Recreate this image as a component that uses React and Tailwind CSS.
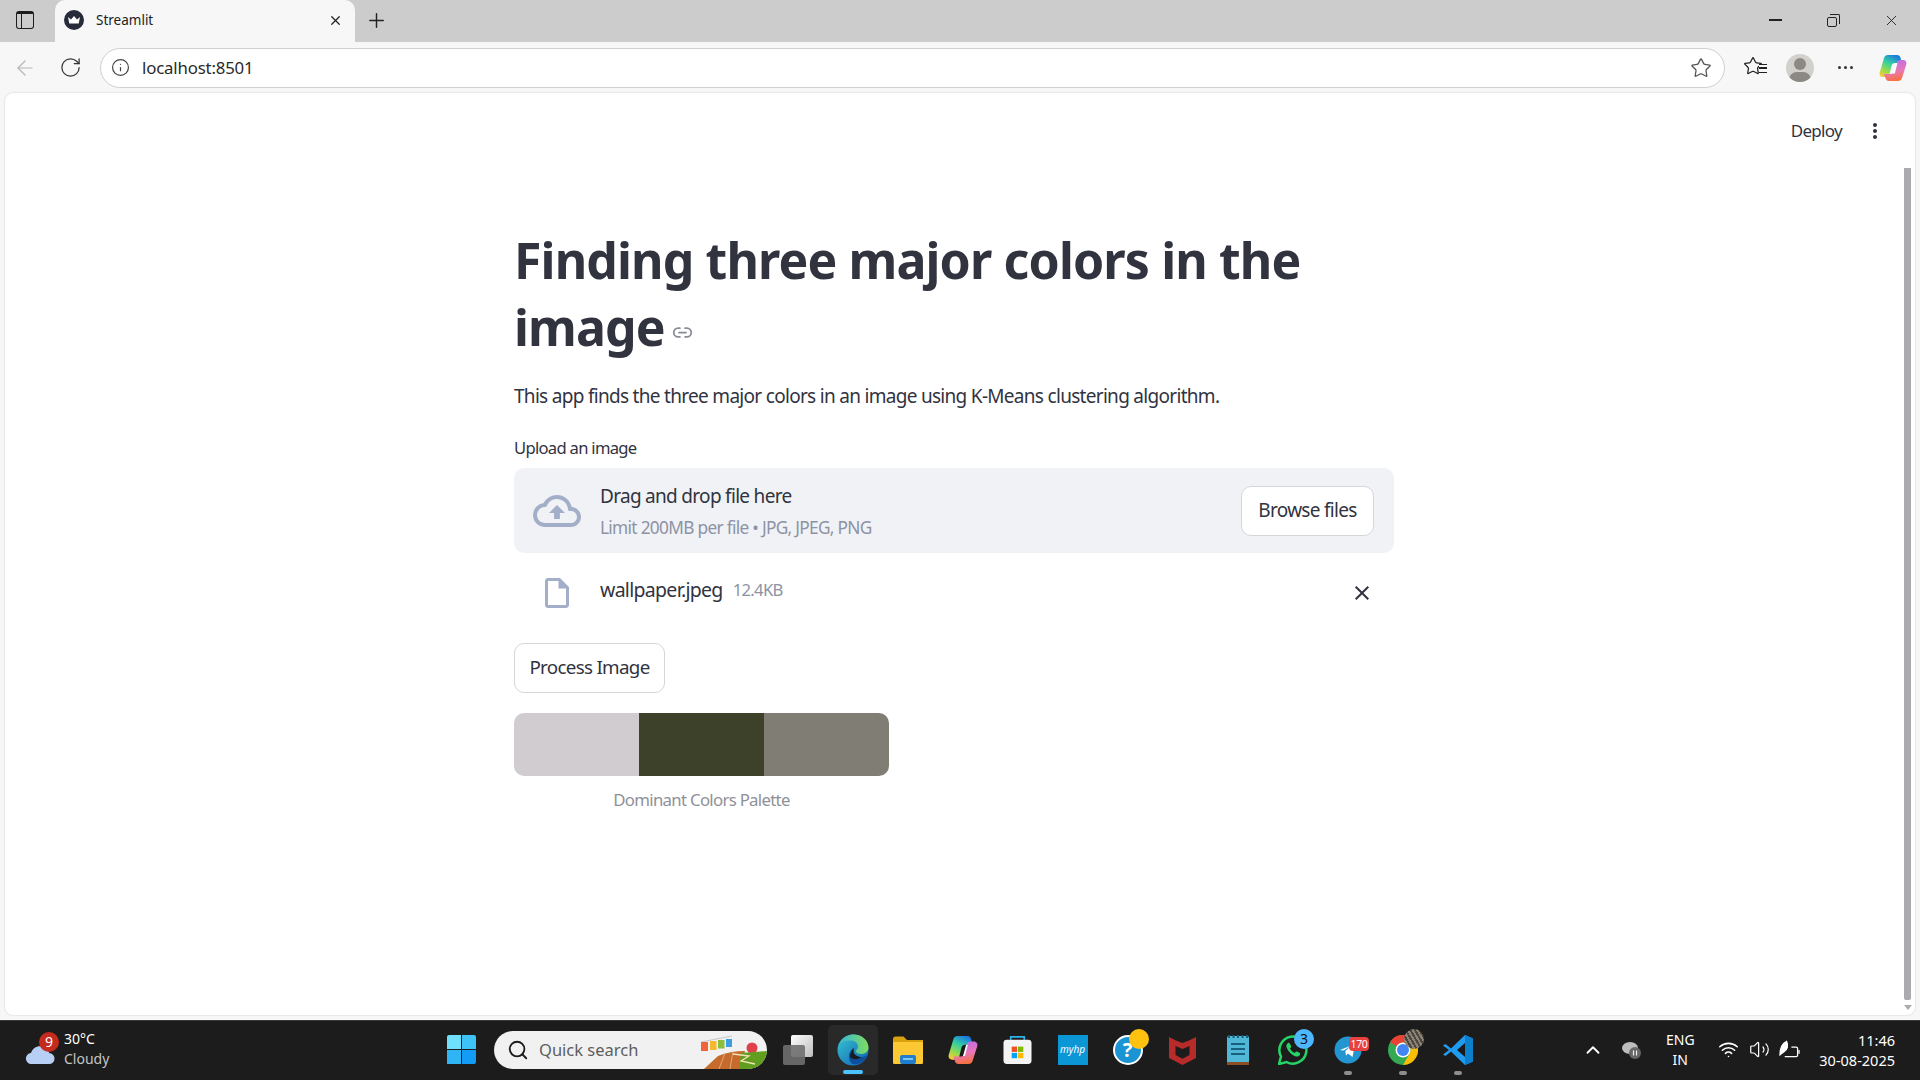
import React from 'react'
import { ArrowLeft, ChevronUp, Info, Link2, Plus, RotateCw, Search, Star, Volume2, Wifi, X } from 'lucide-react'
import { MdClose, MdMoreVert, MdOutlineCloudUpload, MdOutlineInsertDriveFile } from 'react-icons/md'

const ui = "font-['Noto_Sans','Open_Sans',sans-serif]"
const st = "font-['Noto_Sans',sans-serif] tracking-[-0.7px]"

const Crown = () => (
  <svg viewBox="0 0 20 20" className="w-5 h-5">
    <circle cx="10" cy="10" r="10" fill="#262b3a" />
    <path d="M4 7l3 2.5L10 6l3 3.5L16 7l-1.3 6.5H5.300z" fill="#fff" />
  </svg>
)

const WindowsLogo = () => (
  <div className="grid grid-cols-2 gap-[1px] w-[29px] h-[29px]">
    <div className="bg-[#6fe0fb] rounded-tl-[2px]" />
    <div className="bg-[#3dc3f7] rounded-tr-[2px]" />
    <div className="bg-[#2fb4f4]" />
    <div className="bg-[#129cf5] rounded-br-[2px]" />
  </div>
)

const Copilot = ({ size = 28, id = 'cop' }) => (
  <svg viewBox="0 0 28 28" width={size} height={size}>
    <defs>
      <linearGradient id={`${id}A`} x1="0.3" y1="0" x2="0.5" y2="1">
        <stop offset="0" stopColor="#c06be8" />
        <stop offset="0.55" stopColor="#e878b8" />
        <stop offset="1" stopColor="#f8703a" />
      </linearGradient>
      <linearGradient id={`${id}B`} x1="0.7" y1="0" x2="0.2" y2="1">
        <stop offset="0" stopColor="#1a78e4" />
        <stop offset="0.4" stopColor="#35cfa0" />
        <stop offset="0.75" stopColor="#9bdc4a" />
        <stop offset="1" stopColor="#f6c93c" />
      </linearGradient>
    </defs>
    <path d="M9 1h9c2 0 3 1 3.600 3l1.500 5h-7c-2 0-3.100 1-3.600 3l-2 8c-.6 2-2 3-4 3H4C1.500 23 0 21 .7 18.500L5 4c.6-2 2-3 4-3z" fill={`url(#${id}B)`} />
    <path d="M19 27h-9c-2 0-3-1-3.600-3L5 20h7c2 0 3.100-1 3.600-3l2-8c.6-2 2-3 4-3h2.400c2.500 0 4 2 3.300 4.500L23 24c-.6 2-2 3-4 3z" fill={`url(#${id}A)`} />
    <path d="M17 9h1.500l-2.700 10.500H14z" fill="#fff" />
  </svg>
)

const Edge = () => (
  <svg viewBox="0 0 32 32" className="relative w-8 h-8">
    <defs>
      <linearGradient id="edgeA" x1="0" y1="0" x2="1" y2="1">
        <stop offset="0" stopColor="#37c6d0" />
        <stop offset="1" stopColor="#0f5fb5" />
      </linearGradient>
      <linearGradient id="edgeB" x1="0" y1="0" x2="1" y2="0">
        <stop offset="0" stopColor="#36b7d8" />
        <stop offset="1" stopColor="#7fdc5f" />
      </linearGradient>
    </defs>
    <circle cx="16" cy="16" r="15.500" fill="url(#edgeA)" />
    <path d="M2 11C5 3 12 .5 17 .5c8 0 14.500 6 14.500 13 0 4-3 6.500-7.500 6.500-3 0-5-1-5-2.500 0-2 2-2 2-5 0-3.500-3.500-6-7.500-6C8 6.500 4 8 2 11z" fill="url(#edgeB)" />
    <path d="M12 22c0-4 3-7 6-8.500-1 1-1.500 2-1.500 3.500 0 3.500 3.500 6 8 6 2.500 0 4.500-.8 6-2-2 5-7 10-14 9-3-.5-4.500-4-4.500-8z" fill="#0c4f9e" />
    <path d="M16.500 17c0 3.500 3.500 6 8 6-3 2.500-8 3-11 .5-.8-3 .8-7.500 3-9.500-.3 1-.000 2-.000 3z" fill="#1a1c1c" />
  </svg>
)

const Folder = () => (
  <svg viewBox="0 0 30 28" className="w-[30px] h-7">
    <path d="M0 3c0-1.500 1-2.500 2.500-2.500h8L14 4h16v4H0z" fill="#d9a10d" />
    <path d="M0 6h30v20.500c0 1-.6 1.500-1.500 1.500h-27C.6 28 0 27.500 0 26.500z" fill="#fcc934" />
    <rect x="7" y="19" width="16" height="9" rx="2" fill="#1f7fce" />
    <rect x="10" y="22" width="10" height="2" fill="#7cc6f2" />
  </svg>
)

const Store = () => (
  <svg viewBox="0 0 30 30" className="w-[29px] h-[29px]">
    <path d="M8 5V2h14v3" fill="none" stroke="#2bb4ec" strokeWidth="1.800" />
    <rect x="0.500" y="5" width="29" height="25" rx="3.500" fill="#f4f4f4" />
    <rect x="9" y="12" width="5.500" height="5.500" fill="#f25022" />
    <rect x="15.500" y="12" width="5.500" height="5.500" fill="#7fba00" />
    <rect x="9" y="18.500" width="5.500" height="5.500" fill="#00a4ef" />
    <rect x="15.500" y="18.500" width="5.500" height="5.500" fill="#ffb900" />
  </svg>
)

const McAfee = () => (
  <svg viewBox="0 0 27 30" className="w-[27px] h-[30px]">
    <path d="M0 2l7 3.500L13.500 8 20 5.500 27 2v21l-13.500 7L0 23z" fill="#b72c2b" />
    <path d="M6.500 11l7 3 7-3v9l-7 3.700-7-3.700z" fill="#1c1c1c" />
  </svg>
)

const Notepad = () => (
  <svg viewBox="0 0 22 30" className="w-[22px] h-[30px]">
    <rect x="0" y="1" width="22" height="28" rx="1.500" fill="#51b7d6" />
    <rect x="0" y="27" width="22" height="3" fill="#8d4e25" />
    <path d="M2 0v3M6.500 0v3M11 0v3M15.500 0v3M20 0v3" stroke="#1a5f7a" strokeWidth="2" />
    <path d="M4 9h14M4 14h14M4 19h14" stroke="#17607e" strokeWidth="2" />
  </svg>
)

const Whatsapp = () => (
  <svg viewBox="0 0 30 30" className="w-[30px] h-[30px]">
    <path d="M1 29l2-7.500A13.500 13.500 0 1 1 8.500 27z" fill="none" stroke="#25d366" strokeWidth="2.500" />
    <path d="M10 8c-1 .7-2 2-1.500 4 .8 3.500 5.500 8.500 9.500 9.500 2 .4 3.500-.5 4-2 .3-1 0-1.500-.5-1.800l-2.500-1.200c-.7-.3-1.200 0-1.500.5l-.8 1c-1.700-.5-4-3-4.700-4.500l.8-1c.4-.5.4-1 .2-1.500L11.800 8.500C11.400 7.700 10.700 7.500 10 8z" fill="#25d366" />
  </svg>
)

const Telegram = () => (
  <svg viewBox="0 0 28 28" className="w-7 h-7">
    <circle cx="14" cy="14" r="13.500" fill="#2396d2" />
    <path d="M6 14l15-6-2.500 13-4.500-3.500-2 2-.7-4.500 6.200-5.500-8 5z" fill="#fff" />
  </svg>
)

const Chrome = () => (
  <svg viewBox="0 0 30 30" className="w-[30px] h-[30px]">
    <circle cx="15" cy="15" r="15" fill="#34a853" />
    <path d="M15 0a15 15 0 0 1 13 7.500H15A7.500 7.500 0 0 0 8.500 11.300L2 7A15 15 0 0 1 15 0z" fill="#ea4335" />
    <path d="M28 7.500A15 15 0 0 1 15 30l6.500-11.300A7.500 7.500 0 0 0 21.500 11z" fill="#fbbc04" />
    <circle cx="15" cy="15" r="7.500" fill="#fff" />
    <circle cx="15" cy="15" r="6" fill="#4285f4" />
  </svg>
)

const Vscode = () => (
  <svg viewBox="0 0 30 30" className="w-[30px] h-[30px]">
    <path d="M22 0l8 3.500v23L22 30 8 16.500 2.500 21 0 19.500 6 15 0 10.500 2.500 9 8 13.500z" fill="#1f9cf0" />
    <path d="M22 8l-8 7 8 7z" fill="#1a1a1a" />
    <path d="M22 0l8 3.500v23L22 30z" fill="#0b7fcc" />
  </svg>
)

const SearchArt = () => (
  <svg viewBox="0 0 66 38" className="absolute right-0 top-0 w-[66px] h-[38px]">
    <path d="M31 5L0 11" stroke="#bbb" strokeWidth="0.800" />
    <rect x="0" y="11" width="7" height="9" fill="#f0643c" />
    <rect x="9" y="10" width="6.500" height="9" fill="#f5b82e" />
    <rect x="17" y="9" width="6.500" height="8.500" fill="#8dbf3f" />
    <rect x="25" y="8" width="6" height="8" fill="#3a9fe0" />
    <circle cx="51" cy="17" r="5.500" fill="#e0404a" />
    <path d="M3 38l14-13q12-5 27-5L40 38z" fill="#c66b2b" />
    <path d="M40 22l26-2v18H38z" fill="#5f9e1f" />
    <path d="M18 38l6-16M29 38l3-18" stroke="#eac79a" strokeWidth="0.700" />
    <path d="M32 23l16 2-8 5 14 3" fill="none" stroke="#f2e3b5" strokeWidth="1.300" />
  </svg>
)

const Badge = ({ className, children }) => (
  <span className={`absolute flex items-center justify-center rounded-full text-[14px] leading-none ${className}`}>{children}</span>
)

const Dot = () => <span className="absolute bottom-0 left-1/2 -translate-x-1/2 w-[8px] h-[4px] rounded-full bg-[#8e8e8e]" />

const Slot = ({ children, className = '' }) => (
  <div className={`relative w-[55px] h-[50px] flex items-center justify-center ${className}`}>{children}</div>
)

const BrowserBar = () => (
  <div className={`${ui} shrink-0 bg-[#f7f7f7]`}>
    <div className="h-[42px] bg-[#cccccc] flex items-end">
      <div className="w-[55px] h-[42px] flex items-center justify-center pr-[6px] pb-[2px]">
        <div className="w-[18px] h-[18px] rounded-[3px] border-[1.500px] border-[#1c1c1c] border-t-[3px] flex">
          <div className="w-[5px] border-r-[1.500px] border-[#1c1c1c]" />
        </div>
      </div>
      <div className="w-[300px] h-[42px] bg-[#f7f7f7] rounded-t-[10px] flex items-center pl-[9px] pr-[12px] pb-[2px]">
        <Crown />
        <span className="ml-[12px] flex-1 text-[13.500px] text-[#222]">Streamlit</span>
        <X className="w-[15px] h-[15px] text-[#222]" strokeWidth={2} />
      </div>
      <div className="w-[42px] h-[42px] flex items-center justify-center pb-[2px]">
        <Plus className="w-[23px] h-[23px] text-[#222]" strokeWidth={1.500} />
      </div>
      <div className="flex-1" />
      <div className="h-[42px] flex items-center text-[#222] pr-[20px] pb-[2px]">
        <div className="w-[13px] h-[1.500px] bg-[#222]" />
        <div className="relative ml-[45px] w-[13px] h-[13px] mt-[1px]">
          <div className="absolute left-0 bottom-0 w-[10px] h-[10px] border-[1.500px] border-[#222] rounded-[2px]" />
          <div className="absolute right-0 top-0 w-[10px] h-[10px] border-t-[1.500px] border-r-[1.500px] border-[#222] rounded-tr-[2px]" />
        </div>
        <X className="ml-[43px] w-[17px] h-[17px]" strokeWidth={1.300} />
      </div>
    </div>
    <div className="h-[51px] flex items-center pl-[13px]">
      <ArrowLeft className="w-[24px] h-[24px] text-[#b5b5b5]" strokeWidth={1.200} />
      <RotateCw className="ml-[22px] w-[23px] h-[23px] text-[#333]" strokeWidth={1.300} />
      <div className="ml-[18px] w-[1625px] h-[40px] rounded-full bg-white border border-[#cfcfcf] flex items-center pl-[10px] pr-[12px]">
        <Info className="w-[19px] h-[19px] text-[#444]" strokeWidth={1.500} />
        <span className="ml-[12px] flex-1 text-[16.800px] text-[#2a2a2a] tracking-[-0.01em]">localhost:8501</span>
        <Star className="w-[22px] h-[22px] text-[#555]" strokeWidth={1.400} />
      </div>
      <div className="relative ml-[18px] w-[24px] h-[24px]">
        <Star className="w-[20px] h-[20px] text-[#222]" strokeWidth={1.500} />
        <div className="absolute right-0 top-[8px] w-[8px] h-[9px] border-t-[1.500px] border-b-[1.500px] border-[#222] bg-[#f7f7f7]">
          <div className="mt-[2.500px] h-[1.500px] bg-[#222]" />
        </div>
      </div>
      <div className="ml-[19px] w-[28px] h-[28px] rounded-full bg-[#d2d0cd] relative overflow-hidden flex justify-center">
        <div className="absolute top-[4px] w-[12px] h-[12px] rounded-full bg-[#8c8884]" />
        <div className="absolute top-[18px] w-[22px] h-[16px] rounded-full bg-[#8c8884]" />
      </div>
      <div className="ml-[24px] flex gap-[3px]">
        <span className="w-[3px] h-[3px] rounded-full bg-[#333]" />
        <span className="w-[3px] h-[3px] rounded-full bg-[#333]" />
        <span className="w-[3px] h-[3px] rounded-full bg-[#333]" />
      </div>
      <div className="ml-[26px]"><Copilot id="copTop" /></div>
    </div>
  </div>
)

const Uploader = () => (
  <div className="mt-[9px] h-[85px] rounded-[10px] bg-[#f0f2f6] flex items-center pl-[19px] pr-[20px]">
    <MdOutlineCloudUpload className="w-[48px] h-[48px] text-[#a3aec9]" />
    <div className="ml-[19px] flex-1">
      <div className="text-[19px] leading-[28px] text-[#31333f]">Drag and drop file here</div>
      <div className="mt-[7px] text-[17.300px] leading-[22px] text-[#8d93a5]">Limit 200MB per file • JPG, JPEG, PNG</div>
    </div>
    <button className="w-[133px] h-[50px] rounded-[10px] bg-white border border-[#d5d6da] text-[19px] text-[#31333f]">Browse files</button>
  </div>
)

const Palette = () => (
  <div className="mt-[20px] w-[375px]">
    <div className="h-[63px] rounded-[10px] overflow-hidden flex">
      <div className="flex-1 bg-[#d0ccd0]" />
      <div className="flex-1 bg-[#3e412a]" />
      <div className="flex-1 bg-[#807d74]" />
    </div>
    <p className="mt-[13px] text-center text-[16.800px] leading-[22px] text-[#8f9199]">Dominant Colors Palette</p>
  </div>
)

const Page = () => (
  <div className="flex-1 bg-white rounded-t-[8px] rounded-b-[8px] mx-[5px] flex min-h-0 shadow-[0_0_2px_rgba(0,0,0,0.2)]">
    <div className={`${st} flex-1 flex flex-col min-w-0`}>
      <div className="h-[76px] flex items-center justify-end pr-[16px]">
        <span className="text-[17px] text-[#31333f]">Deploy</span>
        <MdMoreVert className="ml-[21px] w-[24px] h-[24px] text-[#31333f]" />
      </div>
      <div className="w-[880px] mx-auto">
        <h1 className="mt-[58px] text-[50px] leading-[67px] tracking-[-0.87px] font-bold text-[#31333f]">
          Finding three major colors in the image
          <Link2 className="inline-block ml-[7px] w-[21px] h-[21px] text-[#8a8c95] align-[3px]" strokeWidth={2} />
        </h1>
        <p className="mt-[21px] text-[19px] leading-[28px] text-[#31333f]">This app finds the three major colors in an image using K-Means clustering algorithm.</p>
        <label className="block mt-[27px] text-[16.600px] leading-[22px] text-[#31333f]">Upload an image</label>
        <Uploader />
        <div className="h-[80px] flex items-center">
          <MdOutlineInsertDriveFile className="ml-[25px] w-[36px] h-[36px] text-[#a3aec9]" />
          <span className="ml-[25px] mb-[7px] text-[19.500px] text-[#31333f]">wallpaper.jpeg</span>
          <span className="ml-[10px] mb-[6px] text-[16.700px] text-[#8d93a5]">12.4KB</span>
          <MdClose className="ml-auto mr-[20px] w-[24px] h-[24px] text-[#31333f]" />
        </div>
        <button className="mt-[10px] w-[151px] h-[50px] pb-[2px] rounded-[10px] bg-white border border-[#d5d6da] text-[18.800px] text-[#31333f]">Process Image</button>
        <Palette />
      </div>
    </div>
    <div className="w-[12px] shrink-0 flex flex-col items-center pr-[3px] pt-[75px] pb-[5px]">
      <div className="w-[7px] flex-1 bg-[#ababaf] rounded-b-[2px]" />
      <div className="mt-[5px] w-0 h-0 border-l-[4px] border-r-[4px] border-t-[5px] border-l-transparent border-r-transparent border-t-[#ababaf]" />
    </div>
  </div>
)

const Taskbar = () => (
  <div className={`${ui} mt-[5px] shrink-0 h-[60px] bg-[#1c1c1c] border-t border-[#3a3a3a] flex items-center pb-[2px] text-white`}>
    <div className="w-[447px] pl-[25px] flex items-center">
      <div className="relative w-[32px] h-[30px]">
        <svg viewBox="0 0 32 22" className="absolute left-0 top-[9px] w-[30px] h-[20px]">
          <path d="M7 22a6 6 0 0 1-1-12C8 4 14 1 19 3c5 1 7 5 7 7a6 6 0 0 1 0 12z" fill="#b7cff5" />
        </svg>
        <span className="absolute left-[14px] top-[-3px] w-[20px] h-[20px] rounded-full bg-[#c42b1c] flex items-center justify-center text-[14px] leading-none">9</span>
      </div>
      <div className="ml-[7px] -mt-[1px] text-[14px] leading-[20px]">
        <div className="text-white">30°C</div>
        <div className="text-[#c4c4c4]">Cloudy</div>
      </div>
    </div>
    <div className="w-[47px] flex justify-start"><WindowsLogo /></div>
    <div className="w-[273px] h-[38px] rounded-full bg-[#f1f1f1] flex items-center pl-[13px] relative overflow-hidden">
      <Search className="w-[22px] h-[22px] text-[#1c1c1c]" strokeWidth={2} />
      <span className="ml-[10px] mt-[1px] text-[16.500px] text-[#5e5e5e]">Quick search</span>
      <SearchArt />
    </div>
    <div className="ml-[3px] flex items-center">
      <Slot>
        <div className="relative w-[30px] h-[30px]">
          <div className="absolute right-0 top-0 w-[22px] h-[22px] rounded-[2px] bg-gradient-to-br from-white to-[#bdbdbd]" />
          <div className="absolute left-0 bottom-0 w-[22px] h-[20px] rounded-[2px] bg-[#6f6f6f]/90" />
        </div>
      </Slot>
      <Slot>
        <div className="absolute inset-y-0 left-[2.500px] right-[2.500px] rounded-[5px] bg-[#292929]" />
        <Edge />
        <span className="absolute bottom-[1px] left-1/2 -translate-x-1/2 w-[20px] h-[4px] rounded-full bg-[#4cc2ff]" />
      </Slot>
      <Slot><Folder /></Slot>
      <Slot><Copilot size={30} id="copBar" /></Slot>
      <Slot><Store /></Slot>
      <Slot>
        <div className="w-[30px] h-[30px] bg-[#0b96d6] flex items-center justify-center text-[10px] italic text-white">myhp</div>
      </Slot>
      <Slot>
        <div className="w-[30px] h-[30px] rounded-full bg-[#1a94d2] border-2 border-white flex items-center justify-center text-[20px] font-bold leading-none">?</div>
        <Badge className="right-[6px] top-[4px] w-[20px] h-[20px] bg-[#ffc20e]" />
      </Slot>
      <Slot><McAfee /></Slot>
      <Slot><Notepad /></Slot>
      <Slot>
        <Whatsapp />
        <Badge className="right-[6px] top-[4px] w-[20px] h-[20px] bg-[#4db8ff] text-[#111]">3</Badge>
      </Slot>
      <Slot>
        <Telegram />
        <span className="absolute right-[6px] top-[12px] w-[20px] h-[14px] rounded-[4px] bg-[#e8403f] text-center text-[10.500px] leading-[14px] tracking-[-0.3px] text-white">170</span>
        <Dot />
      </Slot>
      <Slot>
        <Chrome />
        <span className="absolute right-[6px] top-[4px] w-[20px] h-[20px] rounded-full bg-[repeating-linear-gradient(60deg,#8b8378,#8b8378_2px,#4d473f_2px,#4d473f_4px)]" />
        <Dot />
      </Slot>
      <Slot>
        <Vscode />
        <Dot />
      </Slot>
    </div>
    <div className="flex-1 flex items-center justify-end pr-[25px]">
      <ChevronUp className="w-[22px] h-[22px] text-white" strokeWidth={2} />
      <svg viewBox="0 0 22 18" className="ml-[16px] w-[22px] h-[18px]">
        <ellipse cx="10" cy="7" rx="8" ry="6" fill="#bdbdbd" />
        <circle cx="15" cy="12" r="6" fill="#666" />
        <path d="M13.500 9.500v5M16.500 9.500v5" stroke="#eee" strokeWidth="1.200" />
      </svg>
      <div className="ml-[18px] w-[40px] text-center text-[14px] leading-[20px]">
        <div>ENG</div>
        <div>IN</div>
      </div>
      <Wifi className="ml-[18px] w-[21px] h-[21px]" strokeWidth={1.800} />
      <Volume2 className="ml-[10px] w-[21px] h-[21px]" strokeWidth={1.400} />
      <svg viewBox="0 0 22 20" className="ml-[9px] w-[21px] h-[20px]" fill="none" stroke="#fff" strokeWidth="1.300">
        <path d="M6 17h12a1.500 1.500 0 0 0 1.500-1.500v-7A1.500 1.500 0 0 0 18 7h-5" />
        <path d="M21 10v4" />
        <path d="M1 15C1 8 4 3 8 1c2 4 1 9-3 11-1 .6-3 2-4 3z" fill="#fff" />
      </svg>
      <div className="ml-[19px] text-right text-[14.500px] leading-[20px]">
        <div>11:46</div>
        <div>30-08-2025</div>
      </div>
    </div>
  </div>
)

export default function App() {
  return (
    <div className="w-[1920px] h-[1080px] flex flex-col bg-[#f7f7f7] overflow-hidden">
      <BrowserBar />
      <Page />
      <Taskbar />
    </div>
  )
}
